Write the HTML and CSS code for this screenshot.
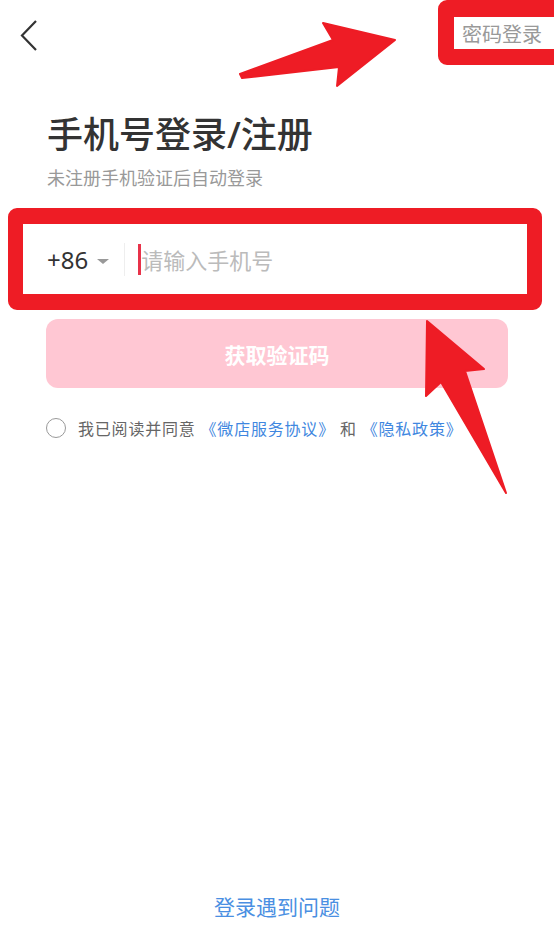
FILE: index.html
```html
<!DOCTYPE html>
<html lang="zh-CN">

<head>
    <meta charset="UTF-8">
    <meta name="viewport" content="width=device-width, initial-scale=1.0">
    <title>手机号登录/注册</title>
    <link rel="stylesheet" href="styles.css">
</head>

<body>
    <div class="screen">
        <div class="topbar">
            <button class="back-button" aria-label="返回">
                <svg width="20" height="34" viewBox="0 0 20 34">
                    <polyline points="16,2 2,16.5 16,31" fill="none" stroke="#333" stroke-width="2.2" />
                </svg>
            </button>
            <a class="pwd-login" href="#">密码登录</a>
        </div>

        <div class="heading">
            <h1>手机号登录/注册</h1>
            <p class="subtitle">未注册手机验证后自动登录</p>
        </div>

        <!-- annotated field: the red frame belongs to the screenshot -->
        <div class="phone-frame">
            <div class="phone-row">
                <div class="area-code">
                    <span>+86</span>
                    <span class="caret-down"></span>
                </div>
                <div class="divider"></div>
                <div class="phone-input">
                    <span class="cursor"></span>
                    <span class="placeholder">请输入手机号</span>
                </div>
            </div>
        </div>

        <button class="code-button">获取验证码</button>

        <div class="agreement">
            <span class="check"></span>
            <span class="agree-text">我已阅读并同意 <a href="#">《微店服务协议》</a> 和 <a href="#">《隐私政策》</a></span>
        </div>

        <div class="footer">
            <a href="#">登录遇到问题</a>
        </div>

        <!-- annotations over the screenshot -->
        <div class="mark-top"></div>
        <svg class="arrows" width="554" height="947" viewBox="0 0 554 947">
            <polygon points="240,74 333,40 323,23 395,40 337,86 339,67 242,78" fill="#ee1c25" stroke="#ee1c25" stroke-width="2" stroke-linejoin="round" />
            <polygon points="427,321 484,369 465,371 506,493 441,382 426,396" fill="#ee1c25" stroke="#ee1c25" stroke-width="2" stroke-linejoin="round" />
        </svg>
    </div>
</body>

</html>
```

FILE: styles.css
```css
* {
    margin: 0;
    padding: 0;
    box-sizing: border-box;
}

body {
    font-family: "Noto Sans", "Noto Sans CJK SC", sans-serif;
    background: #fff;
    color: #333;
}

a {
    text-decoration: none;
}

.screen {
    position: relative;
    width: 554px;
    height: 947px;
    display: flex;
    flex-direction: column;
    overflow: hidden;
}

.topbar {
    height: 72px;
    display: flex;
    justify-content: space-between;
    align-items: flex-start;
}

.back-button {
    background: none;
    border: none;
    margin: 19px 0 0 20px;
    width: 20px;
    height: 34px;
    cursor: pointer;
}

.back-button svg {
    display: block;
}

.pwd-login {
    margin: 20px 12px 0 0;
    font-size: 20px;
    line-height: 30px;
    color: #999;
}

.heading {
    padding-left: 47px;
    margin-top: 41px;
}

h1 {
    font-size: 36px;
    line-height: 44px;
    font-weight: 500;
    color: #333;
}

.subtitle {
    margin-top: 8px;
    font-size: 18px;
    line-height: 26px;
    color: #999;
}

.phone-frame {
    margin: 17px 12px 0 8px;
    border: 16px solid #ee1c25;
    border-left-width: 15px;
    border-right-width: 15px;
    border-radius: 9px;
}

.phone-row {
    height: 70px;
    display: flex;
    align-items: center;
    padding-left: 24px;
}

.area-code {
    display: flex;
    align-items: center;
    gap: 9px;
    font-size: 24px;
    color: #333;
}

.caret-down {
    width: 0;
    height: 0;
    border-left: 6px solid transparent;
    border-right: 6px solid transparent;
    border-top: 5px solid #999;
    margin-top: 4px;
}

.divider {
    width: 1px;
    height: 33px;
    background: #eee;
    margin-left: 15px;
}

.phone-input {
    display: flex;
    align-items: center;
    margin-left: 13px;
}

.cursor {
    width: 3px;
    height: 31px;
    background: #e8334a;
}

.placeholder {
    font-size: 22px;
    color: #bbb;
}

.code-button {
    margin: 9px 0 0 46px;
    width: 462px;
    height: 69px;
    border: none;
    border-radius: 12px;
    background: #ffc7d3;
    color: #fff;
    font-family: inherit;
    font-size: 21px;
    font-weight: 700;
}

.agreement {
    display: flex;
    align-items: center;
    gap: 12px;
    margin: 28px 0 0 46px;
}

.check {
    width: 20px;
    height: 20px;
    border: 1.5px solid #999;
    border-radius: 50%;
}

.agree-text {
    font-size: 16px;
    letter-spacing: 0.8px;
    color: #666;
}

.agree-text a {
    color: #3f87e0;
}

.footer {
    margin-top: auto;
    padding-bottom: 24px;
    text-align: center;
    line-height: 28px;
}

.footer a {
    font-size: 21px;
    color: #4a8fe2;
}

.mark-top {
    position: absolute;
    left: 438px;
    top: 0;
    width: 130px;
    height: 65px;
    border: 16px solid #ee1c25;
    border-top-width: 17px;
    border-right-width: 9px;
    border-radius: 9px;
    pointer-events: none;
}

.arrows {
    position: absolute;
    left: 0;
    top: 0;
    pointer-events: none;
}
```
